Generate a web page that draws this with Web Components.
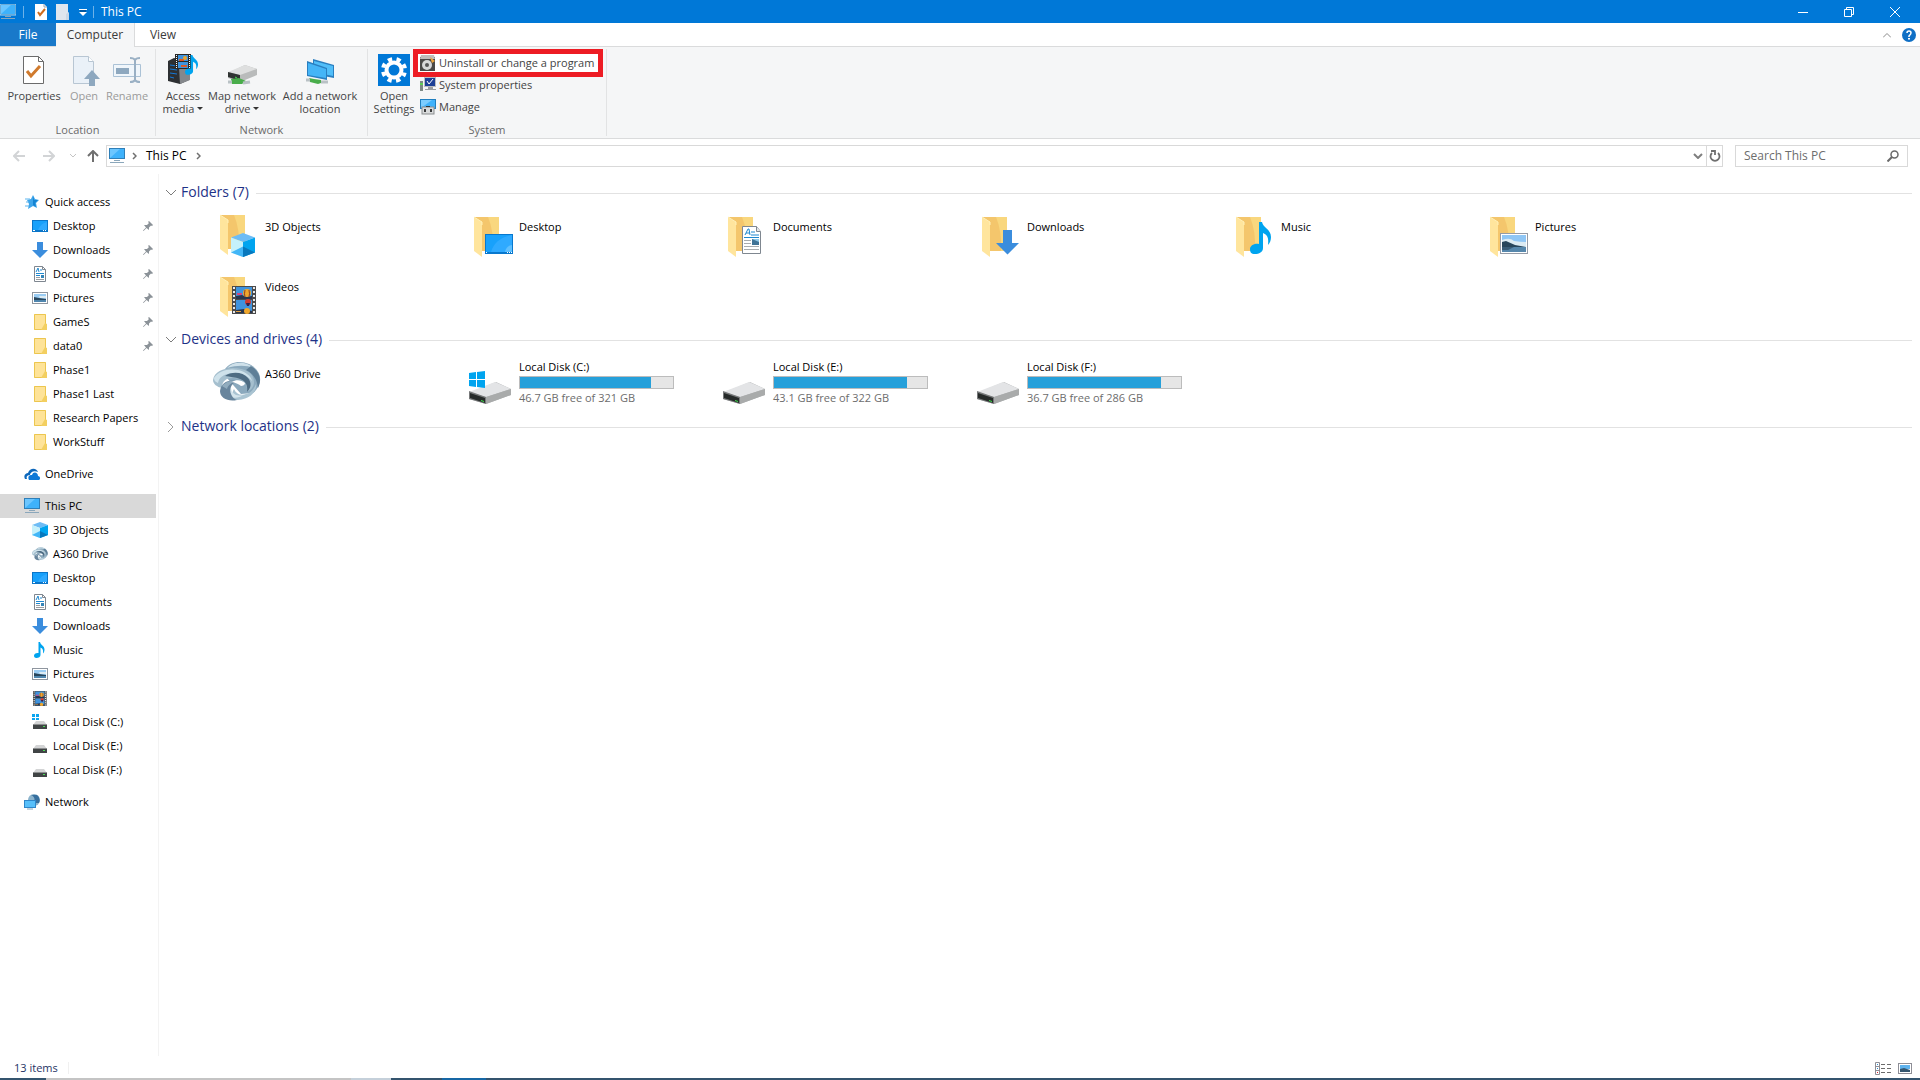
<!DOCTYPE html>
<html lang="en">
<head>
<meta charset="utf-8">
<title>This PC</title>
<style>
    body {
        margin : 0;
        background-color : white;
        color : black;
        font-family : "Open Sans", "Noto Sans", sans-serif;
        font-size : 11px;
        line-height : 16px;
    }
</style>
</head>
<body>
<explorer-window></explorer-window>

<script>
const FOLDER = `
    <path d="M7 6h25v34H15z" fill="#f9d77e"/><path d="M7 6h14q6 14 5 34H15z" fill="#f4c66c"/>
    <path d="M7 6l8 5v35l-8-6z" fill="#ffe59d"/><path d="M7 6l8 5v3" fill="none" stroke="#fff0b8"/>`;
const FOLDER_SMALL = `
    <rect x="2" y="0" width="12" height="16" fill="#fee398"/><path d="M2.500.5h11v15h-11z" fill="none" stroke="#ecc64f"/>
    <path d="M9 16l4-7 2 1v6z" fill="#f3cf60"/>`;
const PC = `
    <rect x="0" y="0" width="16" height="11" fill="#2f7fb8"/><rect x="1" y="1" width="14" height="9" fill="#3fb2fb"/>
    <path d="M1 10V1h10z" fill="#6cc6ff"/><path d="M5 12h6v1H5zM1 14h14v1H1z" fill="#8ba7bb"/>`;
const CUBE = `
    <path d="M8 0l8 3-8 3-8-3z" fill="#6ebcf5"/><path d="M0 3l8 3v10l-8-3z" fill="#c5f1fb"/>
    <path d="M16 3L8 6v10l8-3z" fill="#00a4ef"/><path d="M0 13l8-4v7z" fill="#42b6f7"/><path d="M8 9l8 4-8 3z" fill="#0878bd"/>`;
const DISK = `
    <path d="M2 35l27-11 15 7v6L19 46 2 41z" fill="#b5b7b8"/><path d="M2 34l26-10 16 7-25 8z" fill="#e3e4e6"/>
    <path d="M19 39l25-8v6L19 46z" fill="#a9abab"/><path d="M2 33l17 6v7L2 41z" fill="#77797a"/>
    <path d="M3 35l15 5v5L3 40z" fill="#262a29"/><path d="M14 42l3 1v1l-3-1z" fill="#3fe04c"/>`;
const DISK_SMALL = `
    <path d="M4 7h8l3 4H1z" fill="#d3d4d5"/><rect x="1" y="10" width="14" height="5" fill="#404445"/>
    <path d="M1 10h14v1H1z" fill="#8c8e8f"/><rect x="11" y="12" width="2" height="1" fill="#4bdc55"/>`;
const FILM = `
    <rect width="24" height="28" fill="#4b4b4b"/><rect x="4" y="1" width="16" height="12" fill="#3f93dd"/>
    <rect x="4" y="14" width="16" height="13" fill="#3f93dd"/>
    <path d="M2 1v27M22 1v27" stroke="#e8e8e8" stroke-width="2" stroke-dasharray="2 2"/>
    <path d="M4 10l6-1 4 2 6-1v3H4zM4 24l8-1 8 2v2H4z" fill="#28364f"/><path d="M5 7h5v2H5z" fill="#d6457a"/>
    <circle cx="15" cy="7" r="4" fill="#efa62c"/><path d="M13 4q-1 4 0 7M17 4q1 4 0 7" stroke="#8c3f21" fill="none"/>
    <circle cx="16" cy="16" r="3" fill="#ce3b31"/><path d="M14 17h4l-1 3h-2z" fill="#33204a"/>
    <circle cx="15" cy="25" r="3" fill="#efa62c"/><path d="M4 25h5v1H4z" fill="#e5a03c"/>`;
const PHOTO = `
    <rect x=".5" y=".5" width="27" height="20" fill="#fff" stroke="#959ba6"/><rect x="2" y="2" width="24" height="17" fill="#8fc6f5"/>
    <path d="M2 7q8-3 12 1 6 1 12 1v5H2z" fill="#dcebf3"/><path d="M2 9l4-1 9 4 11 2v1H2z" fill="#28465c"/>
    <path d="M2 14h24v5H2z" fill="#5687ac"/><path d="M2 14h12l-6 3H2z" fill="#395c78"/>`;
const NOTE = `<path d="M12 0c1 6 9 7 9 15 0 3-1 6-3 8 1-8-1-10-5-12v15c0 4-4 6-8 6s-5-2-5-5 4-6 9-5V0z" fill="#00a4ef"/>`;
const PAPER = `
    <path d="M.5.5h14l4 5v22H.5z" fill="#fff" stroke="#7f8790"/><path d="M14.500.5v5h4" fill="#e4e7ea" stroke="#7f8790"/>
    <path d="M3 9l3-6h1l1 6M4 7h4" fill="none" stroke="#1e88d0"/><path d="M9 6h4M9 9h8M2 11.500h15" stroke="#1e88d0"/>
    <path d="M2 14.500h7M2 17.500h7M2 20.500h15M2 23.500h15" stroke="#a8abae"/><rect x="10" y="13" width="7" height="6" fill="#3f7396"/><path d="M10 13h7v3z" fill="#8ec9e9"/>`;
const PAPER_SMALL = `
    <path d="M2.500.5h8l3 3v12h-11z" fill="#fff" stroke="#7f8790"/><path d="M10.500.5v3h3" fill="none" stroke="#7f8790"/>
    <path d="M4 6l2-4 1 4M8 4h2M4 7.500h8M4 9.500h4" fill="none" stroke="#1e88d0"/><path d="M4 11.500h4M4 13.500h8" stroke="#9a9ea2"/>
    <rect x="9" y="9" width="3" height="3" fill="#3585b8"/>`;
const SWIRL = `
    <path d="M12 11C17 4 27 2 36 6c8 4 12 10 11 17-1 5-3 9-7 12l-12 1-14-16z" fill="#8ba9bd"/>
    <path d="M14 10C20 3 33 3 41 10c-8-3-17-3-27 0z" fill="#cfe1ea"/>
    <path d="M38 8c9 6 11 14 7 22-1-8-4-14-12-18z" fill="#5f7f97"/>
    <path d="M0 22C1 14 10 10 20 10c12 0 21 5 21 14 0 5-3 8-7 10 1-9-5-14-14-14-7 0-11 3-11 10C4 29 0 26 0 22z" fill="#a5bfce"/>
    <path d="M1 20c4-7 14-10 24-8 8 2 13 6 14 11-5-6-12-8-20-8-8 1-13 4-14 10-3-1-4-3-4-5z" fill="#cfe2eb"/>
    <path d="M12 18c7-5 18-4 23 2 4 5 3 10-1 14 1-6-1-11-7-13-5-2-10-2-15-3z" fill="#4e6c83"/>
    <path d="M43 26c1 8-6 15-18 16-6 0-7-6-4-11 2 5 7 7 12 5 5-1 8-5 10-10z" fill="#aac4d2"/>
    <path d="M18 29c0 6 5 10 12 8-5 4-13 4-14-2 0-2 1-4 2-6z" fill="#d5e5ec"/>
    <path d="M7 33c1-8 8-12 17-10-6 3-8 8-6 13 1 3 3 5 6 6-9 2-17-2-17-9z" fill="#68859d"/>
    <path d="M9 28c4-5 10-6 15-5-5 1-9 4-10 8z" fill="#91acbe"/>
    <path d="M19 24c4-3 10-2 13 1 0 2-2 3-4 3-2-2-5-3-9-4z" fill="#fff"/>`;

const ICONS = {
    pc : [16, 16, PC],
    titlePc : [16, 16, PC + `<path d="M0 0h16v11H0z" fill="none" stroke="#a9d9f8"/>`],
    titleProps : [12, 16, `<path d="M0 0h9l3 3v13H0z" fill="#fff"/><path d="M9 0v3h3" fill="none" stroke="#9aa6b0"/><path d="M3 8l2 3 5-6" fill="none" stroke="#cd6c1e" stroke-width="2"/>`],
    titleNew : [14, 16, `<path d="M0 0h12v9h1v7H0z" fill="#dfe6ee"/><path d="M10 16v-6l3-2v8z" fill="#c9d7e6"/>`],
    titleDrop : [8, 8, `<path d="M0 1h8v1H0z" fill="#fff"/><path d="M0 4h8L4 8z" fill="#fff"/><path d="M1 3h6" stroke="#003a70"/>`],
    minimize : [10, 10, `<path d="M0 5h10v1H0z" fill="#fff"/>`],
    restore : [10, 10, `<path d="M.5 2.500h7v7h-7zM2.500 2V.5h7v7H8" fill="none" stroke="#fff"/>`],
    close : [10, 10, `<path d="M0 0l10 10M10 0L0 10" fill="none" stroke="#fff"/>`],
    help : [14, 14, `<circle cx="7" cy="7" r="7" fill="#0f6fc5"/><path d="M5 5q0-2 2-2t2 2q0 1-2 3v1" fill="none" stroke="#fff" stroke-width="1.500"/><path d="M6 10h2v1.500H6z" fill="#fff"/>`],
    collapse : [8, 5, `<path d="M0 4.500l4-4 4 4" fill="none" stroke="#8a8a8a"/>`],
    properties : [32, 32, `<path d="M5.500 2.500h15l5 5v22h-20z" fill="#fff" stroke="#6b6b6b"/><path d="M20.500 2.500v5h5" fill="none" stroke="#6b6b6b"/><path d="M9 17l4 5 9-10" fill="none" stroke="#d07a2d" stroke-width="3"/>`],
    open : [32, 32, `<path d="M5.500 2.500h15l5 5v22h-20z" fill="#eaf1f8" stroke="#b8c6d3"/><path d="M20.500 2.500v5h5" fill="#fff" stroke="#b8c6d3"/><path d="M24 16l8 9h-5v7h-6v-7h-5z" fill="#8ea8bf"/>`],
    rename : [32, 32, `<path d="M2.500 10.500h27v12h-27z" fill="#f0f6fb" stroke="#abc2d6"/><path d="M5 14h13v6H5z" fill="#8ea8bf"/><path d="M19 4q4 0 5 2 1-2 5-2M19 28q4 0 5-2 1 2 5 2M24 5v22" fill="none" stroke="#9ab0c4" stroke-width="2"/>`],
    media : [32, 32, `<path d="M1 7l6-3 15 4v18l-9 4-12-3z" fill="#2d3033"/><path d="M12 13l11-3v16l-10 4z" fill="#85888c"/><path d="M3 11l7 1M3 15l7 1M3 19l7 1M3 23l4 1" stroke="#1579d8"/>
        <rect x="8" y="0" width="16" height="15" fill="#282828"/><rect x="11" y="1" width="10" height="6" fill="#3f93dd"/><rect x="11" y="8" width="10" height="6" fill="#3f93dd"/><path d="M9.500 1v14M22.500 1v14" stroke="#fff" stroke-dasharray="1 1"/>
        <path d="M12 5h5v2h-5zM14 11h6v2h-6z" fill="#d65a2b"/><circle cx="18" cy="4" r="2" fill="#efa62c"/><g transform="translate(18 1) scale(.62)">${NOTE}</g>`],
    mapDrive : [32, 32, `<path d="M2 19l17-8 12 4v6L14 28 2 24z" fill="#b9bbbb"/><path d="M2 18l17-7 12 4-17 6z" fill="#dedfdf"/><path d="M2 18l12 3v6L2 23z" fill="#2f3332"/><path d="M9 23l2 1" stroke="#46e052"/><path d="M5 25l8-1 7 3-4 3H6z" fill="#49ad4b"/><path d="M2 28h4M17 29l7-1" stroke="#b9c1c5" stroke-width="3"/>`],
    addLocation : [32, 32, `<path d="M9 5l21 6v13L9 20z" fill="#2a7fc0"/><path d="M10 7l19 5v10l-19-4z" fill="#51bef9"/><path d="M3 7l20 7v12L3 22z" fill="#2a7fc0"/><path d="M4 9l18 6v9L4 21z" fill="#45b5f7"/><path d="M5 24l5 1 7 1v3l-3 1-8-2z" fill="#49ad4b"/><path d="M2 26h4M17 28h7" stroke="#b9c1c5" stroke-width="3"/>`],
    settings : [32, 32, `<rect width="32" height="32" fill="#0078d7"/><circle cx="16" cy="16" r="7.500" fill="none" stroke="#fff" stroke-width="4"/>
        <circle cx="16" cy="16" r="11" fill="none" stroke="#fff" stroke-width="4" stroke-dasharray="4.320 4.320" stroke-dashoffset="2.160" transform="rotate(22.500 16 16)"/>`],
    uninstall : [16, 16, `<rect x="0" y="2" width="15" height="14" fill="#4a4947"/><path d="M1 0h13l1 4H0z" fill="#bfbdba"/><circle cx="7" cy="10" r="5" fill="#d8d8d8"/><circle cx="7" cy="10" r="2" fill="#555"/><path d="M10 2l5 4-3 2z" fill="#eda53c"/>`],
    sysProps : [16, 16, `<rect x="4" y="0" width="12" height="10" fill="#b9bcc0"/><rect x="5" y="1" width="10" height="8" fill="#1c3f96"/><path d="M7 4l2 3 4-5" fill="none" stroke="#fff"/><path d="M8 10h5v3H8zM5 12h11v1H5z" fill="#9a9da0"/><rect x="0" y="4" width="3" height="10" fill="#7e8a85"/><path d="M0 6h3v2H0z" fill="#5ecf55"/>`],
    manage : [16, 16, `<rect width="16" height="10" fill="#1f7fc0"/><path d="M1 1h14v8H1z" fill="#3fb2fb"/><path d="M1 9V1h11z" fill="#7ccdff"/><rect x="2" y="8" width="12" height="7" fill="#d9dbdc" stroke="#8a8d8f"/><path d="M6 8V7h4v1M4 10h2v3H4zM10 10h2v3h-2z" fill="#383a3b"/>`],
    back : [12, 12, `<path d="M12 6H1M6 1L1 6l5 5" fill="none" stroke="#d2d4d6" stroke-width="2"/>`],
    forward : [12, 12, `<path d="M0 6h11M6 1l5 5-5 5" fill="none" stroke="#d2d4d6" stroke-width="2"/>`],
    recent : [6, 4, `<path d="M0 0l3 3 3-3" fill="none" stroke="#c4c4c4"/>`],
    up : [12, 12, `<path d="M6 12V1M1 6l5-5 5 5" fill="none" stroke="#6f6f6f" stroke-width="2"/>`],
    crumb : [5, 8, `<path d="M1 1l3 3-3 3" fill="none" stroke="#707070" stroke-width="1.500"/>`],
    drop : [10, 6, `<path d="M1 1l4 4 4-4" fill="none" stroke="#7f7f7f" stroke-width="2"/>`],
    refresh : [12, 12, `<path d="M3 3a4.500 4.500 0 1 0 6 0M2 1h4v4" fill="none" stroke="#6f6f6f" stroke-width="1.800"/>`],
    search : [12, 12, `<circle cx="7.500" cy="4.500" r="3.500" fill="none" stroke="#6a6a6a" stroke-width="1.500"/><path d="M5 7l-4.500 4.500" stroke="#6a6a6a" stroke-width="2"/>`],
    expanded : [12, 8, `<path d="M1 1l5 5 5-5" fill="none" stroke="#7b7b7b"/>`],
    collapsed : [12, 12, `<path d="M3 1l5 5-5 5" fill="none" stroke="#9b9b9b"/>`],
    pin : [10, 10, `<path d="M6 0l4 4-1 1-1-.500-2 2V9L3.500 7 .5 10 0 9.500l3-3L1 4h3l2-2L5 1z" fill="#8b9298"/>`],
    star : [16, 16, `<path d="M9 1l2 4 4 1-3 3 1 5-4-2-5 3 1-5-2-4 4-1z" fill="#3ea5ea"/><path d="M9 2l1 4 4 0-3 3 1 4-3-2z" fill="#1483d2"/><path d="M1 5h5M2 8h3M1 12h4" stroke="#5db5ee"/>`],
    desktop : [16, 16, `<rect y="2" width="16" height="12" fill="#0b76c9"/><rect x="1" y="3" width="14" height="9" fill="#18a1fb"/><path d="M6 12q3-7 9-8v8z" fill="#2faaff"/><path d="M1 12h2v1H1zM11 12h1v1h-1zM13 12h1v1h-1z" fill="#fff"/>`],
    downloads : [16, 16, `<path d="M5 0h6v8h5l-8 8-8-8h5z" fill="#3b8ddd"/>`],
    documents : [16, 16, PAPER_SMALL],
    pictures : [16, 16, `<rect x=".5" y="2.500" width="15" height="11" fill="#fff" stroke="#8f969f"/><path d="M2 4h12v5H2z" fill="#9accf3"/><path d="M2 7l5 1 7 1v1H2z" fill="#28465c"/><path d="M2 10h12v2H2z" fill="#4f86ae"/><path d="M7 6h7v2H8z" fill="#dcebf3"/>`],
    folder : [16, 16, FOLDER_SMALL],
    oneDrive : [16, 16, `<path d="M1 13c-2-4 1-6 3-6 2-6 9-5 10-1-5-2-8 1-8 3-3 0-4 2-3 4z" fill="#0d67bb"/><path d="M5 14c-2-4 1-5 3-5 1-4 6-3 6 1 2 0 3 3 1 4z" fill="#0d78d7"/>`],
    objects : [16, 16, CUBE],
    a360 : [16, 16, `<g transform="scale(.333)">${SWIRL}</g>`],
    music : [16, 16, `<g transform="translate(2) scale(.500)">${NOTE}</g>`],
    videos : [16, 16, `<g transform="translate(1 1) scale(.570 .535)">${FILM}</g>`],
    diskC : [16, 16, DISK_SMALL + `<path d="M0 0h3v3H0zM4 0h3v3H4zM0 4h3v2H0zM4 4h3v2H4z" fill="#0aa5f0"/>`],
    disk : [16, 16, DISK_SMALL],
    network : [16, 16, `<circle cx="10" cy="6" r="6" fill="#8bb3cc"/><path d="M7 1q5 2 3 8h5q2-5-2-8z" fill="#376f9e"/><rect x="0" y="6" width="12" height="8" fill="#2f86c9"/><rect x="1" y="7" width="10" height="6" fill="#57bffa"/><path d="M3 15h6" stroke="#8ba7bb"/>`],
    bigObjects : [48, 48, `<g transform="translate(0 -2)">${FOLDER}</g><g transform="translate(18 22) scale(1.500)">${CUBE}</g>`],
    bigDesktop : [48, 48, FOLDER + `<rect x="18" y="23" width="28" height="20" fill="#0878ce"/><rect x="19" y="24" width="26" height="17" fill="#18a1fb"/><path d="M24 41q4-14 21-17v17z" fill="#2faaff"/><path d="M38 41q1-6 7-7v7z" fill="#5fc0ff"/><path d="M19 41h1v1h-1zM40 41h1v1h-1zM42 41h1v1h-1zM44 41h1v1h-1z" fill="#fff"/>`],
    bigDocuments : [48, 48, FOLDER + `<g transform="translate(21 15)">${PAPER}</g>`],
    bigDownloads : [48, 48, FOLDER + `<path d="M28 19h9v13h7L32.500 43.500 21 32h7z" fill="#3b8ddd"/>`],
    bigMusic : [48, 48, FOLDER + `<g transform="translate(21 11)">${NOTE}</g>`],
    bigPictures : [48, 48, FOLDER + `<g transform="translate(17 22)">${PHOTO}</g>`],
    bigVideos : [48, 48, FOLDER + `<g transform="translate(19 15)">${FILM}</g>`],
    bigA360 : [48, 48, SWIRL],
    bigDiskC : [48, 48, DISK + `<path d="M2 15l7-1v7H2zM10 14l8-1v8h-8zM2 22h7v7l-7-1zM10 22h8v8l-8-1z" fill="#00a4ef"/>`],
    bigDisk : [48, 48, DISK],
    details : [16, 13, `<path d="M.5.5h4v12h-4zM0 4.500h5M0 8.500h5" fill="none" stroke="#8e8e96"/><path d="M2 2h1v1H2zM2 6h1v1H2z" fill="#2f8fd0"/><path d="M2 10h1v1H2z" fill="#e0202c"/><path d="M6 2.500h4M12 2.500h4M6 6.500h4M12 6.500h4M6 10.500h4M12 10.500h4" stroke="#6b6b6b"/>`],
    large : [14, 11, `<rect x=".5" y=".5" width="13" height="10" fill="#fff" stroke="#8e8e96"/><path d="M2 2h10v4H2z" fill="#5fb3ee"/><path d="M2 6l4-1 6 2v2H2z" fill="#35566f"/>`]
};

class WinIcon extends HTMLElement {
    constructor() {
        super();
        this.attachShadow({ mode : "open" });
    }

    connectedCallback() {
        const [w, h, shapes] = ICONS[this.getAttribute('name')];
        this.shadowRoot.innerHTML = `
        <style>
            :host { display : block; flex : none; }
            svg { display : block; }
        </style>
        <svg width="${w}" height="${h}" viewBox="0 0 ${w} ${h}" aria-hidden="true">${shapes}</svg>`;
    }
}

class TitleBar extends HTMLElement {
    constructor() {
        super();
        this.attachShadow({ mode : "open" });
    }

    connectedCallback() {
        this.shadowRoot.innerHTML = `
        <style>
            :host {
                display : flex;
                align-items : center;
                height : 23px;
                background-color : #0078d7;
                color : white;
                font-size : 12px;
            }
            button {
                display : flex;
                align-items : center;
                justify-content : center;
                padding : 0;
                border : none;
                background : none;
            }
            .sep {
                width : 1px;
                height : 12px;
                background-color : #6db2e8;
            }
            .quick {
                display : flex;
                align-items : center;
                gap : 9px;
                padding : 0 6px 0 11px;
            }
            .first { margin-left : 7px; }
            .title { margin-left : 7px; }
            .controls {
                display : flex;
                margin-left : auto;
                padding-right : 2px;
            }
            .controls button {
                width : 46px;
                height : 20px;
            }
        </style>
        <win-icon name="titlePc"></win-icon>
        <span class="sep first"></span>
        <div class="quick">
            <button aria-label="Properties"><win-icon name="titleProps"></win-icon></button>
            <button aria-label="New folder"><win-icon name="titleNew"></win-icon></button>
            <button aria-label="Customize"><win-icon name="titleDrop"></win-icon></button>
        </div>
        <span class="sep"></span>
        <span class="title"><slot></slot></span>
        <div class="controls">
            <button aria-label="Minimize"><win-icon name="minimize"></win-icon></button>
            <button aria-label="Restore"><win-icon name="restore"></win-icon></button>
            <button aria-label="Close"><win-icon name="close"></win-icon></button>
        </div>`;
    }
}

class RibbonTabs extends HTMLElement {
    constructor() {
        super();
        this.attachShadow({ mode : "open" });
    }

    connectedCallback() {
        this.shadowRoot.innerHTML = `
        <style>
            :host {
                display : flex;
                height : 24px;
                box-shadow : inset 0 -1px #dadbdc;
                font-size : 12px;
            }
            button {
                font : inherit;
                color : #3b3b3b;
                padding : 0;
                border : none;
                background : none;
            }
            .file {
                width : 56px;
                height : 23px;
                color : white;
                background-color : #1979ca;
            }
            .current {
                width : 79px;
                background-color : #f5f6f7;
                border-right : 1px solid #dadbdc;
            }
            .view { width : 56px; }
            .right {
                display : flex;
                align-items : center;
                gap : 11px;
                margin-left : auto;
                padding-right : 4px;
            }
        </style>
        <button class="file">File</button>
        <button class="current">Computer</button>
        <button class="view">View</button>
        <div class="right">
            <button aria-label="Minimize the ribbon"><win-icon name="collapse"></win-icon></button>
            <button aria-label="Help"><win-icon name="help"></win-icon></button>
        </div>`;
    }
}

class RibbonGroup extends HTMLElement {
    constructor() {
        super();
        this.attachShadow({ mode : "open" });
    }

    connectedCallback() {
        this.shadowRoot.innerHTML = `
        <style>
            :host {
                display : flex;
                flex-direction : column;
                justify-content : space-between;
                height : 87px;
                border-right : 1px solid #e2e3e4;
            }
            .tools {
                display : flex;
                padding : 5px 3px 0 2px;
            }
            .label {
                text-align : center;
                color : #6a6a6a;
                line-height : 13px;
            }
        </style>
        <div class="tools"><slot></slot></div>
        <div class="label">${this.getAttribute('label')}</div>`;
    }
}

class RibbonButton extends HTMLElement {
    constructor() {
        super();
        this.attachShadow({ mode : "open" });
    }

    connectedCallback() {
        const menu = this.hasAttribute('menu') ? '<span class="arrow"></span>' : '';
        const disabled = this.hasAttribute('disabled') ? 'disabled' : '';
        this.shadowRoot.innerHTML = `
        <style>
            :host { display : block; }
            button {
                display : flex;
                flex-direction : column;
                align-items : center;
                gap : 3px;
                width : 100%;
                padding : 0;
                border : none;
                background : none;
                font : inherit;
                line-height : 13px;
                color : #444;
                white-space : nowrap;
            }
            button:disabled { color : #9a9a9a; }
            .arrow {
                display : inline-block;
                margin-left : 3px;
                vertical-align : 3px;
                border : 3px solid transparent;
                border-top-color : #333;
                border-bottom : none;
            }
        </style>
        <button ${disabled}>
            <win-icon name="${this.getAttribute('icon')}"></win-icon>
            <span><slot></slot>${menu}</span>
        </button>`;
    }
}

class RibbonLink extends HTMLElement {
    constructor() {
        super();
        this.attachShadow({ mode : "open" });
    }

    connectedCallback() {
        this.shadowRoot.innerHTML = `
        <style>
            :host { display : block; }
            button {
                display : flex;
                align-items : center;
                gap : 3px;
                width : 100%;
                height : 18px;
                padding : 0 2px;
                border : none;
                background : none;
                font : inherit;
                color : #444;
                white-space : nowrap;
            }
            :host([marked]) button {
                background-color : white;
                outline : 5px solid #ed1c24;
            }
        </style>
        <button><win-icon name="${this.getAttribute('icon')}"></win-icon><slot></slot></button>`;
    }
}

class AddressBar extends HTMLElement {
    constructor() {
        super();
        this.attachShadow({ mode : "open" });
    }

    connectedCallback() {
        this.shadowRoot.innerHTML = `
        <style>
            :host {
                display : flex;
                align-items : center;
                padding : 6px 12px 0 13px;
                font-size : 12px;
            }
            button {
                display : flex;
                align-items : center;
                justify-content : center;
                padding : 0;
                border : none;
                background : none;
            }
            .nav {
                display : flex;
                align-items : center;
                margin-right : 7px;
            }
            .forward { margin : 0 15px 0 18px; }
            .up { margin-left : 11px; }
            .path, .search {
                display : flex;
                align-items : center;
                box-sizing : border-box;
                height : 22px;
                border : 1px solid #d9d9d9;
            }
            .path {
                flex : 1;
                padding-left : 2px;
            }
            .crumbs {
                display : flex;
                align-items : center;
                gap : 7px;
                flex : 1;
            }
            a {
                color : inherit;
                text-decoration : none;
                padding : 0 2px;
            }
            .drop { width : 16px; }
            .refresh {
                width : 16px;
                height : 20px;
                border-left : 1px solid #d9d9d9;
            }
            .search {
                width : 173px;
                margin-left : 12px;
                padding : 0 8px;
            }
            input {
                flex : 1;
                min-width : 0;
                padding : 0;
                border : none;
                outline : none;
                font : inherit;
            }
            input::placeholder { color : #6d6d6d; }
        </style>
        <div class="nav">
            <button aria-label="Back"><win-icon name="back"></win-icon></button>
            <button class="forward" aria-label="Forward"><win-icon name="forward"></win-icon></button>
            <button aria-label="Recent locations"><win-icon name="recent"></win-icon></button>
            <button class="up" aria-label="Up"><win-icon name="up"></win-icon></button>
        </div>
        <div class="path">
            <div class="crumbs">
                <win-icon name="pc"></win-icon>
                <win-icon name="crumb"></win-icon>
                <a href="#">This PC</a>
                <win-icon name="crumb"></win-icon>
            </div>
            <button class="drop" aria-label="Previous locations"><win-icon name="drop"></win-icon></button>
            <button class="refresh" aria-label="Refresh"><win-icon name="refresh"></win-icon></button>
        </div>
        <div class="search">
            <input type="text" aria-label="Search This PC" placeholder="Search This PC">
            <win-icon name="search"></win-icon>
        </div>`;
    }
}

class NavItem extends HTMLElement {
    constructor() {
        super();
        this.attachShadow({ mode : "open" });
    }

    connectedCallback() {
        const pin = this.hasAttribute('pinned') ? '<win-icon class="pin" name="pin"></win-icon>' : '';
        this.shadowRoot.innerHTML = `
        <style>
            :host { display : block; }
            :host([root]:not(:first-child)) { margin-top : 8px; }
            a {
                display : flex;
                align-items : center;
                gap : 5px;
                height : 24px;
                margin-right : 2px;
                padding : 0 3px 0 32px;
                color : inherit;
                text-decoration : none;
                white-space : nowrap;
            }
            :host([root]) a { padding-left : 24px; }
            :host([selected]) a { background-color : #d9d9d9; }
            .pin { margin-left : auto; }
        </style>
        <a href="#"><win-icon name="${this.getAttribute('icon')}"></win-icon><slot></slot>${pin}</a>`;
    }
}

class ItemGroup extends HTMLElement {
    constructor() {
        super();
        this.attachShadow({ mode : "open" });
    }

    connectedCallback() {
        const state = this.hasAttribute('closed') ? 'collapsed' : 'expanded';
        this.shadowRoot.innerHTML = `
        <style>
            :host {
                display : block;
                margin-bottom : 3px;
            }
            button {
                display : flex;
                align-items : center;
                width : 100%;
                height : 24px;
                padding : 0;
                border : none;
                background : none;
                font : inherit;
                font-size : 14px;
                line-height : 20px;
                color : #1e3287;
            }
            .title {
                margin : 0 7px 0 4px;
                padding-bottom : 2px;
            }
            .line {
                flex : 1;
                height : 1px;
                background-color : #e2e2e2;
            }
            .items {
                display : grid;
                grid-template-columns : repeat(auto-fill, 254px);
                grid-auto-rows : 60px;
                padding-left : 48px;
            }
        </style>
        <button>
            <win-icon name="${state}"></win-icon>
            <span class="title">${this.getAttribute('label')}</span>
            <span class="line"></span>
        </button>
        <div class="items"><slot></slot></div>`;
    }
}

class FileTile extends HTMLElement {
    constructor() {
        super();
        this.attachShadow({ mode : "open" });
    }

    connectedCallback() {
        this.shadowRoot.innerHTML = `
        <style>
            :host { display : block; }
            a {
                display : flex;
                gap : 4px;
                padding-top : 6px;
                color : inherit;
                text-decoration : none;
            }
            .name { padding-top : 8px; }
        </style>
        <a href="#"><win-icon name="${this.getAttribute('icon')}"></win-icon><span class="name"><slot></slot></span></a>`;
    }
}

class DriveTile extends HTMLElement {
    constructor() {
        super();
        this.attachShadow({ mode : "open" });
    }

    connectedCallback() {
        const free = this.getAttribute('free');
        const size = this.getAttribute('size');
        this.shadowRoot.innerHTML = `
        <style>
            :host { display : block; }
            a {
                display : flex;
                gap : 4px;
                padding-top : 6px;
                color : inherit;
                text-decoration : none;
            }
            .info {
                display : flex;
                flex-direction : column;
                gap : 1px;
                padding-top : 1px;
            }
            progress {
                appearance : none;
                box-sizing : border-box;
                width : 155px;
                height : 13px;
                border : 1px solid #bcbcbc;
                background-color : #e6e6e6;
            }
            progress::-webkit-progress-bar { background-color : #e6e6e6; }
            progress::-webkit-progress-value { background-color : #26a0da; }
            .free { color : #6d6d6d; }
        </style>
        <a href="#">
            <win-icon name="${this.getAttribute('icon')}"></win-icon>
            <span class="info">
                <span><slot></slot></span>
                <progress max="${size}" value="${size - free}" aria-label="Used space"></progress>
                <span class="free">${free} GB free of ${size} GB</span>
            </span>
        </a>`;
    }
}

class StatusBar extends HTMLElement {
    constructor() {
        super();
        this.attachShadow({ mode : "open" });
    }

    connectedCallback() {
        this.shadowRoot.innerHTML = `
        <style>
            :host {
                display : flex;
                align-items : center;
                height : 20px;
                padding : 2px 8px 0 14px;
                color : #1e3264;
                border-bottom : 2px solid #34546e;
                border-image : linear-gradient(to right, #34546e 48px, #c4c4c4 48px 352px, #c5d0da 352px 392px, #34546e 392px 443px, #1767a5 443px 487px, #34546e 487px) 2;
            }
            .count {
                padding-right : 10px;
                line-height : 12px;
                border-right : 1px solid #f0f0f0;
            }
            .views {
                display : flex;
                align-items : center;
                gap : 7px;
                margin-left : auto;
            }
            button {
                padding : 0;
                border : none;
                background : none;
            }
        </style>
        <span class="count"><slot></slot></span>
        <div class="views">
            <button aria-label="Details"><win-icon name="details"></win-icon></button>
            <button aria-label="Large icons"><win-icon name="large"></win-icon></button>
        </div>`;
    }
}

class ExplorerWindow extends HTMLElement {
    constructor() {
        super();
        this.attachShadow({ mode : "open" });
    }

    connectedCallback() {
        this.shadowRoot.innerHTML = `
        <style>
            :host {
                display : flex;
                flex-direction : column;
                min-height : 100vh;
            }
            .ribbon {
                display : flex;
                padding : 2px 0;
                background-color : #f5f6f7;
                border-bottom : 1px solid #dadbdc;
            }
            .w36 { width : 36px; }
            .w48 { width : 48px; }
            .w50 { width : 50px; }
            .w64 { width : 64px; }
            .w68 { width : 68px; }
            .w88 { width : 88px; }
            .links {
                display : flex;
                flex-direction : column;
                gap : 4px;
                width : 180px;
                padding-right : 5px;
            }
            .body {
                display : flex;
                flex : 1;
                margin-top : 7px;
            }
            nav {
                box-sizing : border-box;
                width : 159px;
                padding-top : 16px;
                border-right : 1px solid #f3f3f3;
            }
            main {
                flex : 1;
                padding : 7px 8px 0 6px;
            }
        </style>
        <title-bar>This PC</title-bar>
        <ribbon-tabs></ribbon-tabs>
        <div class="ribbon">
            <ribbon-group label="Location">
                <ribbon-button class="w64" icon="properties">Properties</ribbon-button>
                <ribbon-button class="w36" icon="open" disabled>Open</ribbon-button>
                <ribbon-button class="w50" icon="rename" disabled>Rename</ribbon-button>
            </ribbon-group>
            <ribbon-group label="Network">
                <ribbon-button class="w50" icon="media" menu>Access<br>media</ribbon-button>
                <ribbon-button class="w68" icon="mapDrive" menu>Map network<br>drive</ribbon-button>
                <ribbon-button class="w88" icon="addLocation">Add a network<br>location</ribbon-button>
            </ribbon-group>
            <ribbon-group label="System">
                <ribbon-button class="w48" icon="settings">Open<br>Settings</ribbon-button>
                <div class="links">
                    <ribbon-link icon="uninstall" marked>Uninstall or change a program</ribbon-link>
                    <ribbon-link icon="sysProps">System properties</ribbon-link>
                    <ribbon-link icon="manage">Manage</ribbon-link>
                </div>
            </ribbon-group>
        </div>
        <address-bar></address-bar>
        <div class="body">
            <nav>
                <nav-item icon="star" root>Quick access</nav-item>
                <nav-item icon="desktop" pinned>Desktop</nav-item>
                <nav-item icon="downloads" pinned>Downloads</nav-item>
                <nav-item icon="documents" pinned>Documents</nav-item>
                <nav-item icon="pictures" pinned>Pictures</nav-item>
                <nav-item icon="folder" pinned>GameS</nav-item>
                <nav-item icon="folder" pinned>data0</nav-item>
                <nav-item icon="folder">Phase1</nav-item>
                <nav-item icon="folder">Phase1 Last</nav-item>
                <nav-item icon="folder">Research Papers</nav-item>
                <nav-item icon="folder">WorkStuff</nav-item>
                <nav-item icon="oneDrive" root>OneDrive</nav-item>
                <nav-item icon="pc" root selected>This PC</nav-item>
                <nav-item icon="objects">3D Objects</nav-item>
                <nav-item icon="a360">A360 Drive</nav-item>
                <nav-item icon="desktop">Desktop</nav-item>
                <nav-item icon="documents">Documents</nav-item>
                <nav-item icon="downloads">Downloads</nav-item>
                <nav-item icon="music">Music</nav-item>
                <nav-item icon="pictures">Pictures</nav-item>
                <nav-item icon="videos">Videos</nav-item>
                <nav-item icon="diskC">Local Disk (C:)</nav-item>
                <nav-item icon="disk">Local Disk (E:)</nav-item>
                <nav-item icon="disk">Local Disk (F:)</nav-item>
                <nav-item icon="network" root>Network</nav-item>
            </nav>
            <main>
                <item-group label="Folders (7)">
                    <file-tile icon="bigObjects">3D Objects</file-tile>
                    <file-tile icon="bigDesktop">Desktop</file-tile>
                    <file-tile icon="bigDocuments">Documents</file-tile>
                    <file-tile icon="bigDownloads">Downloads</file-tile>
                    <file-tile icon="bigMusic">Music</file-tile>
                    <file-tile icon="bigPictures">Pictures</file-tile>
                    <file-tile icon="bigVideos">Videos</file-tile>
                </item-group>
                <item-group label="Devices and drives (4)">
                    <file-tile icon="bigA360">A360 Drive</file-tile>
                    <drive-tile icon="bigDiskC" free="46.7" size="321">Local Disk (C:)</drive-tile>
                    <drive-tile icon="bigDisk" free="43.1" size="322">Local Disk (E:)</drive-tile>
                    <drive-tile icon="bigDisk" free="36.7" size="286">Local Disk (F:)</drive-tile>
                </item-group>
                <item-group label="Network locations (2)" closed></item-group>
            </main>
        </div>
        <status-bar>13 items</status-bar>`;
    }
}

window.customElements.define('win-icon', WinIcon);
window.customElements.define('title-bar', TitleBar);
window.customElements.define('ribbon-tabs', RibbonTabs);
window.customElements.define('ribbon-group', RibbonGroup);
window.customElements.define('ribbon-button', RibbonButton);
window.customElements.define('ribbon-link', RibbonLink);
window.customElements.define('address-bar', AddressBar);
window.customElements.define('nav-item', NavItem);
window.customElements.define('item-group', ItemGroup);
window.customElements.define('file-tile', FileTile);
window.customElements.define('drive-tile', DriveTile);
window.customElements.define('status-bar', StatusBar);
window.customElements.define('explorer-window', ExplorerWindow);
</script>
</body>
</html>
